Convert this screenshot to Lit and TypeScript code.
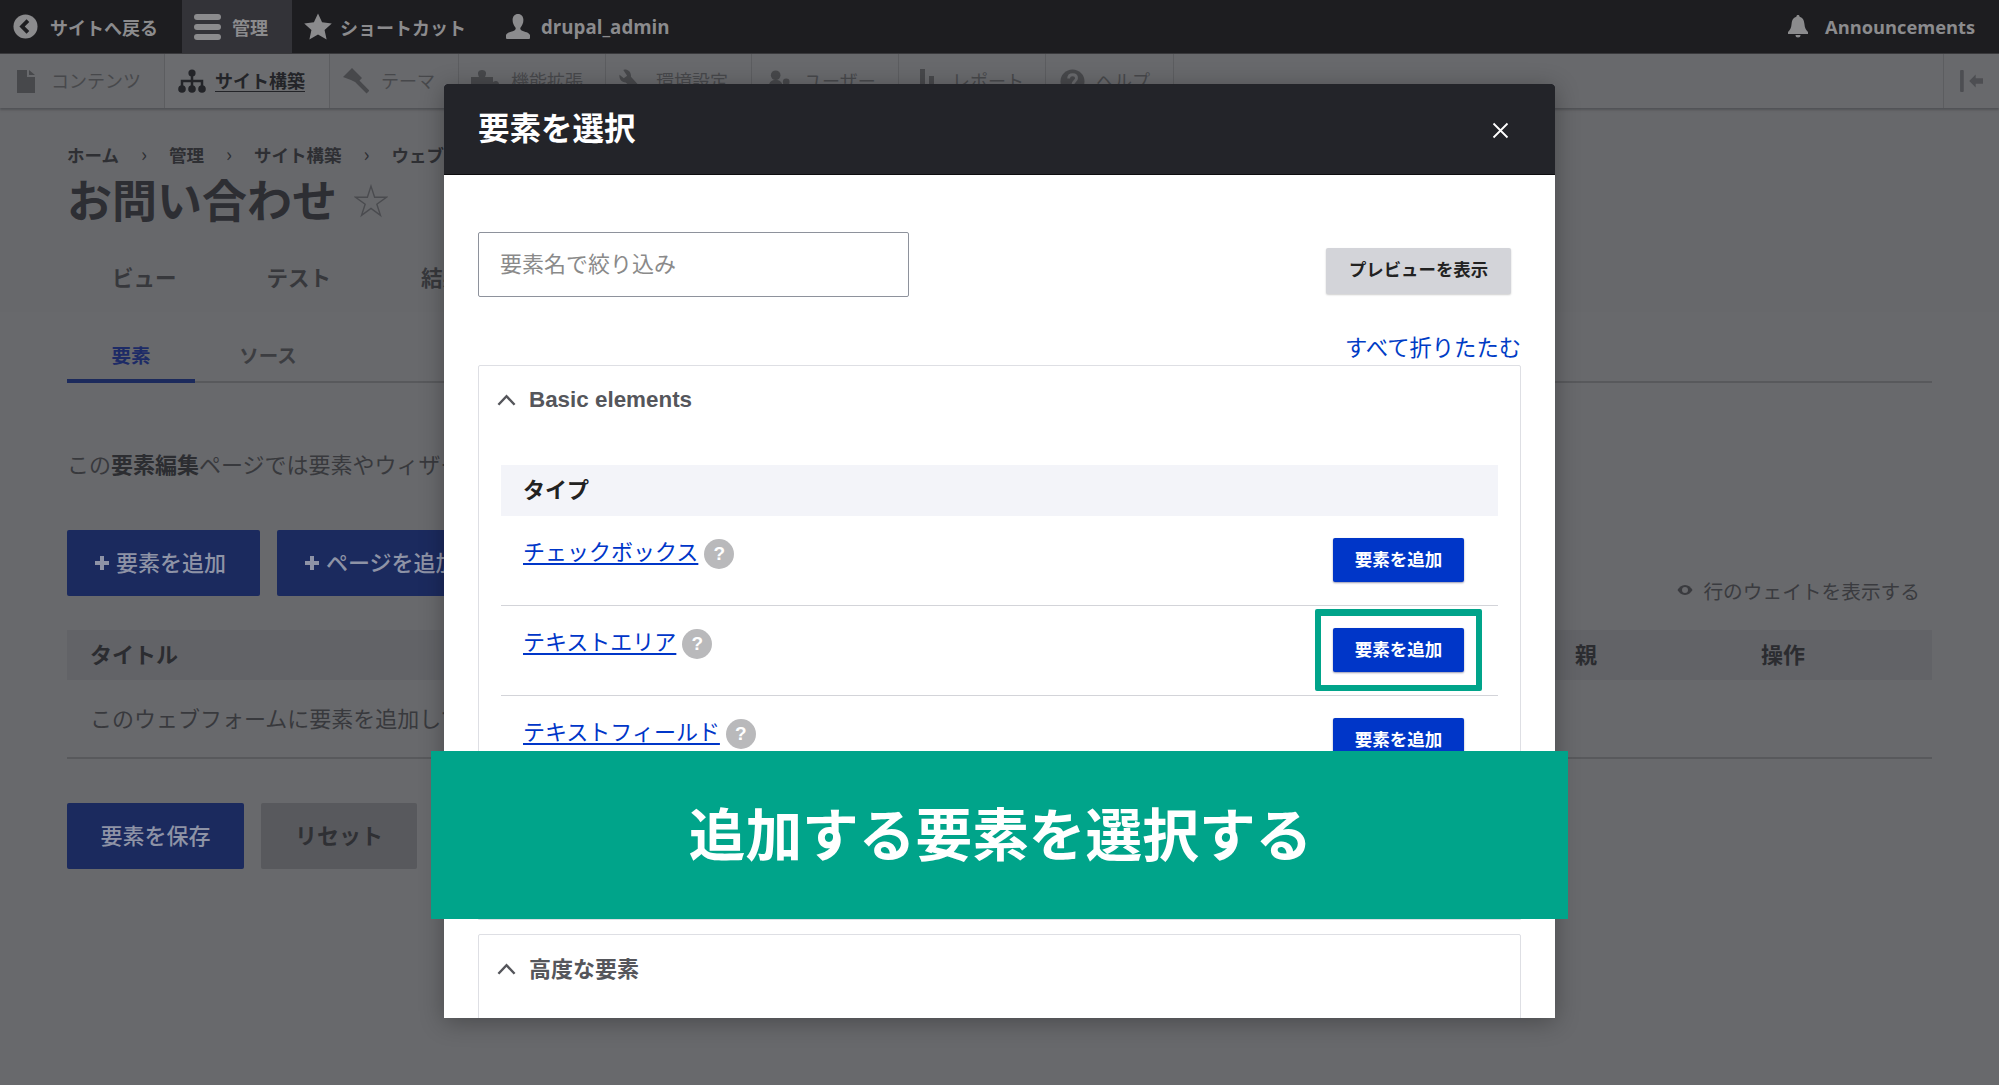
import { LitElement, html, css, svg } from "lit";
import { customElement } from "lit/decorators.js";

const icons = {
  back: svg`<svg viewBox="0 0 26 26" width="25" height="25"><circle cx="13" cy="13" r="12.5" fill="currentColor"/><path d="M15.5 7 9.5 13l6 6" fill="none" stroke="#1d1d20" stroke-width="4"/></svg>`,
  menu: svg`<svg viewBox="0 0 27 26" width="27" height="26"><rect x="0" y="0" width="27" height="6" rx="3" fill="currentColor"/><rect x="0" y="10" width="27" height="6" rx="3" fill="currentColor"/><rect x="0" y="20" width="27" height="6" rx="3" fill="currentColor"/></svg>`,
  star: svg`<svg viewBox="0 0 26 26" width="28" height="28"><path d="M13 .5l3.8 8.2 9 1-6.7 6 1.900 8.800L13 20l-8 4.500 1.900-8.800-6.700-6 9-1z" fill="currentColor"/></svg>`,
  user: svg`<svg viewBox="0 0 26 26" width="26" height="26"><path d="M13 0c3.400 0 5.400 2.600 5.400 6 0 3-1.200 5.600-2.600 7.200-.9 1-.6 2.600.8 3.200 3.400 1.400 7.400 2 8.400 4.600V24a1 1 0 0 1-1 1H2a1 1 0 0 1-1-1v-3c1-2.600 5-3.200 8.400-4.600 1.400-.6 1.700-2.200.8-3.200C8.800 11.600 7.600 9 7.600 6 7.600 2.600 9.600 0 13 0z" fill="currentColor"/></svg>`,
  bell: svg`<svg viewBox="0 0 22 23" width="22" height="23"><path d="M11 0c1 0 1.600.7 1.600 1.700 3.400.8 4.400 3.500 4.800 7 .4 4 1.200 6 3.600 8.300v2H1v-2c2.400-2.300 3.200-4.300 3.600-8.300.4-3.500 1.400-6.200 4.800-7C9.400.7 10 0 11 0zM8.500 20h5a2.500 2.500 0 0 1-5 0z" fill="currentColor"/></svg>`,
  doc: svg`<svg viewBox="0 0 18 23" width="18" height="23"><path d="M0 0h10v7h8v16H0zM12 0l6 5h-6z" fill="currentColor"/></svg>`,
  tree: svg`<svg viewBox="0 0 28 24" width="28" height="24"><circle cx="14" cy="4" r="3.600" fill="currentColor"/><circle cx="4" cy="20" r="3.800" fill="currentColor"/><circle cx="14" cy="20" r="3.800" fill="currentColor"/><circle cx="24" cy="20" r="3.800" fill="currentColor"/><path d="M14 6v12M4 18v-6h20v6" fill="none" stroke="currentColor" stroke-width="2.500"/></svg>`,
  brush: svg`<svg viewBox="0 0 26 26" width="26" height="26"><path d="M9 0l10 10-5 5-6-3-8-3z" fill="currentColor"/><path d="M14 13l11 11" stroke="currentColor" stroke-width="4" fill="none"/></svg>`,
  puzzle: svg`<svg viewBox="0 0 28 24" width="28" height="24"><path d="M0 8h8c-2-4-1-7 3-7s5 3 3 7h8v5c3-2 6-1 6 2.500S25 20 22 18v6H0z" fill="currentColor"/></svg>`,
  wrench: svg`<svg viewBox="0 0 22 24" width="21" height="24"><path d="M6 0c4 0 7 3 6.500 7.500L22 18c1 2-2 6-4.500 4.500L7 13.500C2.500 13.500 0 10 .500 5.500L5 9l3.500-2.500L4.500.5C5 .2 5.500 0 6 0z" fill="currentColor"/></svg>`,
  people: svg`<svg viewBox="0 0 24 24" width="23" height="24"><circle cx="8" cy="6" r="5" fill="currentColor"/><path d="M1 24v-7c0-4 3-6 7-6s7 2 7 6v7z" fill="currentColor"/><circle cx="19" cy="13" r="3.500" fill="currentColor"/><path d="M16 24v-4c0-2 1-3 3-3s4 1 4 3v4z" fill="currentColor"/></svg>`,
  chart: svg`<svg viewBox="0 0 28 24" width="28" height="24"><path d="M0 19h5v5H0zM8 0h5v24H8zM17 7h5v17h-5z" fill="currentColor"/></svg>`,
  help: svg`<svg viewBox="0 0 26 26" width="25" height="25"><circle cx="13" cy="13" r="12.500" fill="currentColor"/><path d="M9 10c0-2.500 1.700-4 4.200-4s4 1.500 4 3.500c0 3-3.600 3-3.600 6" fill="none" stroke="#68696c" stroke-width="3"/><circle cx="13.500" cy="20" r="2" fill="#68696c"/></svg>`,
  toggle: svg`<svg viewBox="0 0 26 24" width="26" height="22"><rect x="0" y="0" width="4" height="24" rx="1" fill="currentColor"/><path d="M10 12l7-7v4h8v6h-8v4z" fill="currentColor"/></svg>`,
  outline: svg`<svg viewBox="0 0 32 32" width="34" height="34"><path d="M16 2l3.400 10.500H30.500l-9 6.500 3.400 10.500-8.900-6.500-8.900 6.500L10.500 19l-9-6.500h11.100z" fill="none" stroke="currentColor" stroke-width="1.300"/></svg>`,
  eye: svg`<svg viewBox="0 0 16 12" width="16" height="12"><path d="M8 1c3.500 0 6 2.500 7.500 5C14 8.500 11.500 11 8 11S2 8.500.5 6C2 3.500 4.500 1 8 1z" fill="currentColor"/><circle cx="8" cy="6" r="3" fill="#68696c"/></svg>`,
  chevron: svg`<svg viewBox="0 0 20 12" width="19" height="12"><path d="M1.500 11 10 2l8.500 9" fill="none" stroke="currentColor" stroke-width="2.600"/></svg>`,
  close: svg`<svg viewBox="0 0 17 17" width="17" height="17"><path d="M1.500 1.500l14 14M15.500 1.500l-14 14" stroke="currentColor" stroke-width="1.800" fill="none"/></svg>`,
};

const trayItems = [
  { i: icons.doc, t: "コンテンツ", w: 165, p: 17, g: 16 },
  { i: icons.tree, t: "サイト構築", w: 165, p: 13, g: 9 },
  { i: icons.brush, t: "テーマ", w: 129, p: 13, g: 12 },
  { i: icons.puzzle, t: "機能拡張", w: 147, p: 12, g: 12 },
  { i: icons.wrench, t: "環境設定", w: 146, p: 13, g: 16 },
  { i: icons.people, t: "ユーザー", w: 147, p: 16, g: 13 },
  { i: icons.chart, t: "レポート", w: 147, p: 13, g: 12 },
  { i: icons.help, t: "ヘルプ", w: 128, p: 14, g: 11 },
];

@customElement("app-root")
export class AppRoot extends LitElement {
  static styles = css`
    :host {
      display: block;
      position: relative;
      width: 1999px;
      height: 1085px;
      overflow: hidden;
      background: #68696c;
      font-family: "Noto Sans CJK JP", "Noto Sans", sans-serif;
      color: #3c3d41;
    }
    svg { display: block; flex: none; }
    .toolbar { display: flex; height: 54px; background: #1d1d20; color: #8b8b8d; font-size: 18px; font-weight: 700; align-items: stretch; border-bottom: 1px solid #3a3a3d; box-sizing: border-box; white-space: nowrap; }
    .tool { display: flex; align-items: center; gap: 12px; }
    .tool.back { padding: 0 24px 0 13px; }
    .tool.admin { background: #333338; padding: 0 0 0 12px; width: 110px; box-sizing: border-box; gap: 11px; }
    .tool.short { padding: 0 39px 0 12px; gap: 8px; }
    .spacer { flex: 1; }
    .tool.user { gap: 10px; font-family: "Open Sans", sans-serif; font-size: 18.700px; }
    .tool.ann { gap: 16px; padding-right: 24px; font-family: "Open Sans", sans-serif; font-size: 18.300px; }
    .tray { display: flex; height: 54px; background: #68696c; box-shadow: 0 2px 2px #515256; position: relative; color: #47484b; font-size: 18px; white-space: nowrap; }
    .tray-item { display: flex; align-items: center; box-sizing: border-box; height: 54px; border-right: 1px solid #5c5d60; }
    .tray-item span { padding-bottom: 2px; }
    .tray-item:nth-child(2) { color: #232428; font-weight: 700; background: #6b6c6f; }
    .tray-item:nth-child(2) span { text-decoration: underline; text-underline-offset: 3px; }
    .tray-end { margin-left: auto; width: 55px; display: flex; align-items: center; justify-content: center; border-left: 1px solid #5c5d60; color: #4d4e52; }
    .head { height: 204px; box-sizing: border-box; padding: 34px 67px 0; background: #67686b; }
    .crumbs { display: flex; align-items: center; height: 24px; font-size: 17.500px; font-weight: 700; color: #2e2f33; }
    .crumbs i { font-style: normal; width: 50px; text-align: center; font-weight: 400; font-size: 20px; line-height: 24px; }
    .title { display: flex; align-items: center; height: 64px; gap: 17px; font-size: 45px; font-weight: 700; color: #2d2e33; }
    .title svg { color: #4a4b4f; margin-top: 6px; }
    .tabs { display: flex; gap: 90px; padding: 31px 0 0 45px; font-size: 21.500px; font-weight: 700; color: #37383c; line-height: 32px; }
    .sub { margin: 0 67px; display: flex; height: 71px; border-bottom: 2px solid #58595c; box-sizing: border-box; font-size: 19.500px; font-weight: 700; }
    .sub div { width: 128px; text-align: center; line-height: 86px; color: #3c3d41; }
    .sub .on { color: #1d2b66; border-bottom: 4px solid #1c2a5c; height: 71px; box-sizing: border-box; }
    .sub .off { margin-left: 18px; width: 110px; }
    .para { margin: 64px 67px 0; font-size: 22px; line-height: 32px; color: #38393d; white-space: nowrap; }
    .para b { font-weight: 700; color: #2c2d31; }
    .actions { display: flex; justify-content: space-between; margin: 51px 67px 0; height: 77px; }
    .btns { display: flex; gap: 17px; }
    .btn { height: 66px; box-sizing: border-box; border-radius: 2px; padding-bottom: 4px; background: #1b2a5e; color: #8e93a6; font-size: 22px; font-weight: 500; display: flex; align-items: center; white-space: nowrap; }
    .btn.add { width: 193px; padding-left: 28px; gap: 7px; }
    .btn.add2 { width: 300px; padding-left: 28px; gap: 7px; }
    .plus { position: relative; width: 14px; height: 14px; margin-top: 4px; background: linear-gradient(#8e93a6,#8e93a6) center/14px 4px no-repeat, linear-gradient(#8e93a6,#8e93a6) center/4px 14px no-repeat; }
    .btn.save { width: 177px; justify-content: center; }
    .btn.reset { width: 156px; justify-content: center; background: #58595d; color: #2f3034; font-weight: 700; }
    .weight { display: flex; align-items: center; gap: 10px; height: 30px; margin: 45px 12px 0 0; font-size: 19.700px; color: #3a3b3f; }
    .thead { position: relative; margin: 23px 67px 0; height: 50px; padding-bottom: 4px; box-sizing: border-box; background: #626367; display: flex; align-items: center; padding-left: 23px; font-size: 22px; font-weight: 700; color: #2b2c30; }
    .thead .pos { position: absolute; top: 7px; line-height: 32px; }
    .tbody { margin: 0 67px; height: 79px; box-sizing: border-box; border-bottom: 2px solid #58595c; padding: 21px 0 0 23px; font-size: 22px; line-height: 32px; color: #38393d; white-space: nowrap; }
    .foot { display: flex; gap: 17px; margin: 44px 67px 0; }

    .dialog { position: absolute; left: 444px; top: 84px; width: 1111px; height: 934px; background: #fff; border-radius: 3px 3px 0 0; box-shadow: 0 4px 24px rgba(0,0,0,.3); display: flex; flex-direction: column; overflow: hidden; }
    .d-head { flex: none; height: 91px; background: #232429; color: #fff; display: flex; align-items: center; justify-content: space-between; padding: 0 46px 0 34px; border-bottom: 1px solid #0d0d0f; box-sizing: border-box; font-size: 31.500px; font-weight: 700; }
    .d-head span { padding-bottom: 6px; }
    .d-head svg { margin-top: 2px; }
    .d-body { padding: 57px 34px 0; }
    .d-top { display: flex; justify-content: space-between; align-items: flex-start; padding-right: 10px; }
    .search { width: 431px; height: 65px; box-sizing: border-box; border: 1px solid #8e929c; border-radius: 2px; font: inherit; font-size: 22px; padding: 0 21px 5px; color: #222; outline: none; }
    .search::placeholder { color: #8a8a8a; opacity: 1; }
    .preview { margin-top: 16px; width: 185px; height: 46px; border: 0; border-radius: 2px; background: #d3d4d9; box-shadow: 0 1px 2px rgba(0,0,0,.2); color: #222; font: inherit; font-size: 17.400px; font-weight: 700; padding: 0 0 5px; }
    .collapse { text-align: right; margin-top: 34px; height: 30px; line-height: 30px; font-size: 22.300px; color: #003cc5; }
    .set { margin-top: 4px; height: 555px; box-sizing: border-box; border: 1px solid #dedfe4; border-radius: 2px 2px 0 0; padding: 0 22px; }
    .set + .set { margin-top: 14px; height: 200px; }
    .legend { display: flex; align-items: center; margin-left: -4px; height: 68px; gap: 13px; font-family: "Liberation Sans", "Noto Sans CJK JP", sans-serif; font-size: 22.400px; font-weight: 700; color: #55565b; }
    .legend svg { color: #55565b; }
    .set + .set .legend { font-family: "Noto Sans CJK JP", sans-serif; font-size: 22px; font-weight: 700; }
    .set + .set .legend span { padding-bottom: 5px; }
    .t-head { margin-top: 31px; height: 51px; background: #f3f4f9; padding-left: 22px; font-size: 22px; font-weight: 700; line-height: 46px; color: #222; }
    .row { height: 90px; box-sizing: border-box; border-bottom: 1px solid #d3d4d9; display: flex; justify-content: space-between; align-items: flex-start; padding: 22px 34px 0 22px; }
    .el { display: flex; align-items: center; gap: 6px; height: 31px; }
    .el a { font-size: 22px; color: #0036c8; text-decoration: underline; text-decoration-thickness: 2px; text-underline-offset: 3px; line-height: 31px; padding-bottom: 7px; }
    .q { width: 30px; height: 30px; border-radius: 50%; background: #b9b9bb; color: #fff; display: flex; align-items: center; justify-content: center; font-size: 19px; font-weight: 700; font-family: "Liberation Sans", sans-serif; }
    .addel { position: relative; width: 131px; height: 44px; border: 0; border-radius: 2px; background: #0036c8; box-shadow: 0 1px 2px rgba(0,0,60,.4); color: #fff; font: inherit; font-size: 17.500px; font-weight: 700; padding: 0 0 3px; flex: none; }
    .mark { position: relative; flex: none; }
    .mark::after { content: ""; position: absolute; left: -18px; right: -18px; top: -19px; bottom: -19px; border: 6px solid #00a48a; border-top-width: 7px; border-radius: 2px; }
    .banner { position: absolute; left: 431px; top: 751px; width: 1137px; height: 168px; box-sizing: border-box; padding: 0 0 8px 2px; background: #00a48a; color: #fff; display: flex; align-items: center; justify-content: center; font-size: 56.700px; font-weight: 700; }
  `;

  render() {
    return html`
      <div class="toolbar">
        <div class="tool back">${icons.back}<span>サイトへ戻る</span></div>
        <div class="tool admin">${icons.menu}<span>管理</span></div>
        <div class="tool short">${icons.star}<span>ショートカット</span></div>
        <div class="tool user">${icons.user}<span>drupal_admin</span></div>
        <div class="spacer"></div>
        <div class="tool ann">${icons.bell}<span>Announcements</span></div>
      </div>
      <div class="tray">
        ${trayItems.map(
          (x) => html`<div
            class="tray-item"
            style="width:${x.w}px;padding-left:${x.p}px;gap:${x.g}px"
          >${x.i}<span>${x.t}</span></div>`
        )}
        <div class="tray-end">${icons.toggle}</div>
      </div>
      <div class="head">
        <div class="crumbs">
          <span>ホーム</span><i>›</i><span>管理</span><i>›</i><span>サイト構築</span><i>›</i><span>ウェブフォーム</span>
        </div>
        <div class="title"><span>お問い合わせ</span>${icons.outline}</div>
        <div class="tabs"><span>ビュー</span><span>テスト</span><span>結果</span></div>
      </div>
      <div class="sub"><div class="on">要素</div><div class="off">ソース</div></div>
      <div class="para">この<b>要素編集</b>ページでは要素やウィザードページを追加できます。</div>
      <div class="actions">
        <div class="btns">
          <div class="btn add"><span class="plus"></span><span>要素を追加</span></div>
          <div class="btn add2"><span class="plus"></span><span>ページを追加</span></div>
        </div>
        <div class="weight">${icons.eye}<span>行のウェイトを表示する</span></div>
      </div>
      <div class="thead">
        <span>タイトル</span>
        <span class="pos" style="left:1508px">親</span>
        <span class="pos" style="left:1694px">操作</span>
      </div>
      <div class="tbody">このウェブフォームに要素を追加してください。</div>
      <div class="foot">
        <div class="btn save">要素を保存</div>
        <div class="btn reset">リセット</div>
      </div>

      <div class="dialog">
        <div class="d-head"><span>要素を選択</span>${icons.close}</div>
        <div class="d-body">
          <div class="d-top">
            <input class="search" placeholder="要素名で絞り込み" />
            <button class="preview">プレビューを表示</button>
          </div>
          <div class="collapse">すべて折りたたむ</div>
          <div class="set">
            <div class="legend">${icons.chevron}<span>Basic elements</span></div>
            <div class="t-head">タイプ</div>
            <div class="row">
              <div class="el"><a>チェックボックス</a><span class="q">?</span></div>
              <button class="addel">要素を追加</button>
            </div>
            <div class="row">
              <div class="el"><a>テキストエリア</a><span class="q">?</span></div>
              <div class="mark"><button class="addel">要素を追加</button></div>
            </div>
            <div class="row">
              <div class="el"><a>テキストフィールド</a><span class="q">?</span></div>
              <button class="addel">要素を追加</button>
            </div>
          </div>
          <div class="set">
            <div class="legend">${icons.chevron}<span>高度な要素</span></div>
          </div>
        </div>
      </div>
      <div class="banner">追加する要素を選択する</div>
    `;
  }
}
